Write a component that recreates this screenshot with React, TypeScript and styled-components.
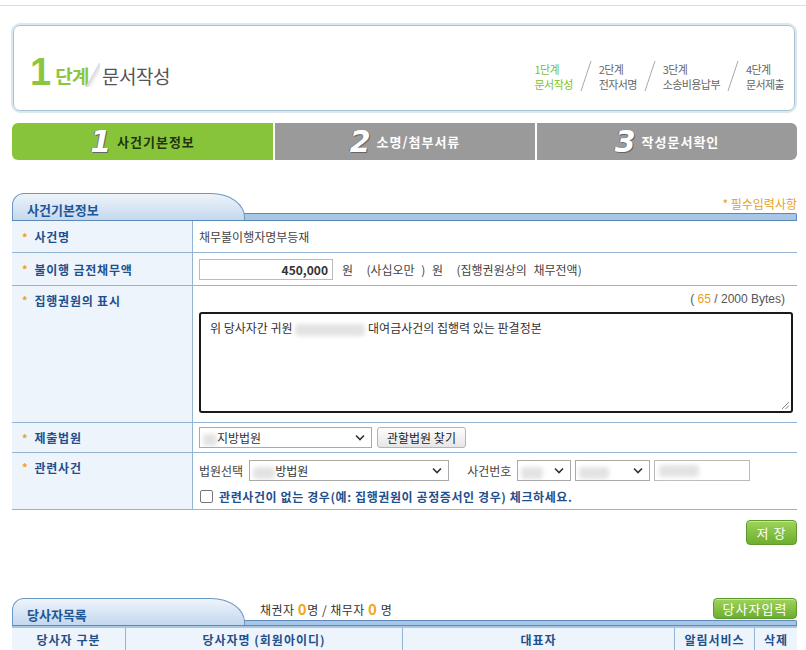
import React from 'react';
import styled, { createGlobalStyle } from 'styled-components';

const Global = createGlobalStyle`
  html, body { margin: 0; padding: 0; background: #fff; }
  body {
    font-family: "Noto Sans CJK KR", "Noto Sans", sans-serif;
    font-size: 12px;
    color: #444;
  }
  * { box-sizing: border-box; }
`;

const Page = styled.div`
  width: 806px;
  padding-top: 5px;
`;

const TopLine = styled.div`
  height: 1px;
  background: #dedede;
`;

const Content = styled.div`
  margin-left: 12px;
  width: 785px;
`;

const HeaderBox = styled.div`
  margin: 19px 0 0 1px;
  width: 782px;
  height: 86px;
  border: 1px solid #a8c2d2;
  box-shadow: 0 0 0 2px #dbe8ef;
  border-radius: 7px;
  display: flex;
  align-items: flex-end;
  justify-content: space-between;
  padding: 0 10px 18px 16px;
`;

const TitleWrap = styled.div`
  display: flex;
  align-items: flex-end;
  margin-bottom: 5px;
`;

const BigNum = styled.span`
  font-family: "Liberation Sans", sans-serif;
  font-size: 38px;
  line-height: 30px;
  font-weight: 700;
  color: #8cc63f;
  margin-right: 4px;
`;

const StepWord = styled.span`
  font-size: 19px;
  line-height: 22px;
  font-weight: 700;
  color: #8cc63f;
  letter-spacing: -0.5px;
`;

const Fold = styled.span`
  display: inline-block;
  width: 14px;
  height: 24px;
  margin: 0 2px 0 -3px;
  background: linear-gradient(120deg, transparent 45%, #d9d9d9 50%, #f5f5f5 65%, transparent 75%);
`;

const TitleText = styled.span`
  font-size: 19px;
  line-height: 22px;
  color: #555;
  letter-spacing: -0.5px;
`;

const Steps = styled.div`
  display: flex;
  align-items: flex-end;
`;

const StepItem = styled.div<{ $active?: boolean }>`
  display: flex;
  flex-direction: column;
  font-size: 11px;
  line-height: 15px;
  letter-spacing: -0.6px;
  color: ${p => (p.$active ? '#7cbf2a' : '#666')};
`;

const Slash = styled.svg`
  width: 12px;
  height: 32px;
  margin: 0 7px;
`;

const TabBar = styled.div`
  margin-top: 12px;
  display: grid;
  grid-template-columns: 261px 260px 260px;
  gap: 2px;
  height: 37px;
`;

const StepTab = styled.div<{ $active?: boolean; $pos: 'first' | 'mid' | 'last' }>`
  background: ${p => (p.$active ? '#88c43a' : '#9a9a9a')};
  border-radius: ${p => (p.$pos === 'first' ? '6px 0 0 6px' : p.$pos === 'last' ? '0 6px 6px 0' : '0')};
  display: flex;
  align-items: center;
  justify-content: center;
  gap: 6px;
  color: ${p => (p.$active ? '#1f3510' : '#fff')};
  font-weight: 700;
  font-size: 13px;
  letter-spacing: 1px;
`;

const TabNum = styled.span`
  font-family: "DejaVu Sans", sans-serif;
  font-style: italic;
  font-weight: 700;
  font-size: 30px;
  line-height: 30px;
  color: #fff;
  letter-spacing: 0;
  text-shadow: 1px 1px 0 #666, -1px 0 0 #777;
`;

const SectionHead = styled.div<{ $mt: number }>`
  margin-top: ${p => p.$mt}px;
  display: flex;
  align-items: flex-end;
  height: 28px;
  border-bottom: 1px solid #5d89b8;
`;

const SecTab = styled.div`
  width: 233px;
  height: 27px;
  background: linear-gradient(#eef4fb, #c4d8ee);
  border: 1px solid #6b96c3;
  border-bottom: none;
  border-radius: 12px 34px 0 0 / 12px 24px 0 0;
  padding: 8px 0 0 14px;
  font-size: 13px;
  font-weight: 700;
  color: #1f5796;
  line-height: 16px;
  margin-right: -1px;
  position: relative;
  z-index: 1;
`;

const SecRight = styled.div`
  flex: 1;
  display: flex;
  flex-direction: column;
  justify-content: flex-end;
  height: 100%;
`;

const SecRightTop = styled.div`
  flex: 1;
  display: flex;
  align-items: center;
  justify-content: space-between;
  padding: 0 0 1px 16px;
`;

const SecBar = styled.div`
  height: 8px;
  background: #a8c6e6;
  border: 1px solid #5d89b8;
  border-bottom: none;
  border-left: none;
  border-radius: 0 2px 0 0;
`;

const Required = styled.span`
  margin-left: auto;
  color: #e6a11c;
  font-size: 12px;
  margin-top: 2px;
`;

const Table = styled.div`
  display: flex;
  flex-direction: column;
`;

const Row = styled.div<{ $h: number }>`
  display: grid;
  grid-template-columns: 181px 1fr;
  height: ${p => p.$h}px;
  border-bottom: 1px solid #93b4d2;
`;

const Label = styled.div<{ $top?: boolean }>`
  background: #edf4fc;
  border-right: 1px solid #93b4d2;
  display: flex;
  align-items: ${p => (p.$top ? 'flex-start' : 'center')};
  padding: ${p => (p.$top ? '6px 0 0 10px' : '0 0 0 10px')};
  font-weight: 700;
  font-size: 12px;
  color: #1f4f8c;
  letter-spacing: 0.8px;
`;

const Star = styled.span`
  color: #f0a020;
  margin-right: 6px;
  font-size: 11px;
`;

const Value = styled.div<{ $col?: boolean }>`
  display: flex;
  flex-direction: ${p => (p.$col ? 'column' : 'row')};
  align-items: ${p => (p.$col ? 'stretch' : 'center')};
  padding: 0 8px 0 6px;
  gap: 6px;
  color: #444;
`;

const Amount = styled.div`
  width: 134px;
  height: 21px;
  border: 1px solid #bbb;
  text-align: right;
  padding: 0 4px;
  font-weight: 700;
  line-height: 19px;
  color: #333;
`;

const Spaced = styled.span`
  word-spacing: 4px;
  margin-left: 3px;
`;

const ByteCount = styled.div`
  text-align: right;
  padding: 6px 4px 0 0;
  font-family: "Liberation Sans", sans-serif;
  font-size: 12px;
  color: #555;
`;

const Orange = styled.span`
  color: #e6a11c;
`;

const TextBox = styled.div`
  position: relative;
  height: 101px;
  border: 2px solid #1a1a1a;
  border-radius: 3px;
  padding: 5px 9px;
  font-size: 12px;
  color: #333;
  margin-right: -4px;
`;

const Grip = styled.svg`
  position: absolute;
  right: 1px;
  bottom: 1px;
  width: 9px;
  height: 9px;
`;

const Blur = styled.span<{ $w: number }>`
  display: inline-block;
  width: ${p => p.$w}px;
  height: 12px;
  vertical-align: middle;
  background: #e3e3e3;
  filter: blur(2px);
  border-radius: 4px;
`;

const SelectBox = styled.div<{ $w: number }>`
  width: ${p => p.$w}px;
  height: 21px;
  border: 1px solid #a9a9a9;
  display: flex;
  align-items: center;
  justify-content: space-between;
  padding: 0 6px 0 3px;
  font-size: 12px;
  color: #333;
  background: #fff;
  overflow: hidden;
  white-space: nowrap;
`;

const Chevron = () => (
  <svg width="10" height="7" viewBox="0 0 10 7">
    <path d="M1 1.5 L5 5.5 L9 1.5" fill="none" stroke="#333" strokeWidth="1.6" />
  </svg>
);

const GrayBtn = styled.button`
  height: 21px;
  padding: 0 9px;
  border: 1px solid #b5b5b5;
  border-radius: 3px;
  background: linear-gradient(#fdfdfd, #e6e6e6);
  font-family: inherit;
  font-size: 12px;
  color: #222;
  margin-left: -1px;
`;

const InputBox = styled.div<{ $w: number }>`
  width: ${p => p.$w}px;
  height: 21px;
  border: 1px solid #bbb;
  display: flex;
  align-items: center;
  padding: 0 4px;
`;

const RelTop = styled.div`
  display: flex;
  align-items: center;
  gap: 4px;
  margin-top: 7px;
`;

const FieldLabel = styled.span<{ $ml?: number }>`
  margin-left: ${p => p.$ml || 0}px;
  margin-right: 2px;
`;

const CheckLine = styled.label`
  display: flex;
  align-items: center;
  gap: 6px;
  font-weight: 700;
  color: #1f4f8c;
  letter-spacing: 0.6px;
  font-size: 12px;
  margin-top: 1px;
`;

const CheckBox = styled.span`
  width: 13px;
  height: 13px;
  border: 1px solid #777;
  border-radius: 2px;
  background: #fff;
  margin-left: 1px;
`;

const ActionRow = styled.div`
  display: flex;
  justify-content: flex-end;
  margin-top: 10px;
`;

const GreenBtn = styled.button<{ $w: number; $h: number }>`
  width: ${p => p.$w}px;
  height: ${p => p.$h}px;
  border: 1px solid #5d9c2c;
  border-radius: 4px;
  background: linear-gradient(#9fd35a, #6cae2f);
  color: #fff;
  font-family: inherit;
  font-size: 13px;
  letter-spacing: 1px;
  padding: 0;
  box-shadow: inset 0 1px 0 rgba(255,255,255,0.4);
`;

const PartyInfo = styled.span`
  font-size: 12px;
  color: #333;
  letter-spacing: 0.5px;
`;

const BigOrange = styled.span`
  color: #f0a81c;
  font-size: 15px;
  font-weight: 700;
`;

const HeadRow = styled.div`
  display: grid;
  grid-template-columns: 114px 277px 272px 80px 1fr;
  height: 24px;
  background: #edf4fc;
  border-top: 2px solid #a8c6e6;
`;

const HeadCell = styled.div<{ $last?: boolean }>`
  border-right: ${p => (p.$last ? 'none' : '1px solid #93b4d2')};
  display: flex;
  align-items: center;
  justify-content: center;
  font-weight: 700;
  font-size: 12px;
  color: #1f4f8c;
  letter-spacing: 1px;
`;

const stepList = [
  { a: '1단계', b: '문서작성', active: true },
  { a: '2단계', b: '전자서명' },
  { a: '3단계', b: '소송비용납부' },
  { a: '4단계', b: '문서제출' },
];

export default function App() {
  return (
    <Page>
      <Global />
      <TopLine />
      <Content>
        <HeaderBox>
          <TitleWrap>
            <BigNum>1</BigNum>
            <StepWord>단계</StepWord>
            <Fold />
            <TitleText>문서작성</TitleText>
          </TitleWrap>
          <Steps>
            {stepList.map((s, i) => (
              <React.Fragment key={s.a}>
                {i > 0 && (
                  <Slash viewBox="0 0 12 32">
                    <line x1="11" y1="1" x2="1" y2="31" stroke="#aaa" strokeWidth="1" />
                  </Slash>
                )}
                <StepItem $active={s.active}>
                  <span>{s.a}</span>
                  <span>{s.b}</span>
                </StepItem>
              </React.Fragment>
            ))}
          </Steps>
        </HeaderBox>

        <TabBar>
          <StepTab $active $pos="first"><TabNum>1</TabNum>사건기본정보</StepTab>
          <StepTab $pos="mid"><TabNum>2</TabNum>소명/첨부서류</StepTab>
          <StepTab $pos="last"><TabNum>3</TabNum>작성문서확인</StepTab>
        </TabBar>

        <SectionHead $mt={33}>
          <SecTab>사건기본정보</SecTab>
          <SecRight>
            <SecRightTop>
              <Required>* 필수입력사항</Required>
            </SecRightTop>
            <SecBar />
          </SecRight>
        </SectionHead>

        <Table>
          <Row $h={32}>
            <Label><Star>*</Star>사건명</Label>
            <Value>채무불이행자명부등재</Value>
          </Row>
          <Row $h={33}>
            <Label><Star>*</Star>불이행 금전채무액</Label>
            <Value>
              <Amount>450,000</Amount>
              <Spaced>원 &nbsp;(사십오만 ) 원 &nbsp;(집행권원상의 채무전액)</Spaced>
            </Value>
          </Row>
          <Row $h={137}>
            <Label $top><Star>*</Star>집행권원의 표시</Label>
            <Value $col>
              <ByteCount>( <Orange>65</Orange> / 2000 Bytes)</ByteCount>
              <TextBox>
                위 당사자간 귀원 <Blur $w={70} /> 대여금사건의 집행력 있는 판결정본
                <Grip viewBox="0 0 9 9">
                  <line x1="8" y1="1" x2="1" y2="8" stroke="#888" />
                  <line x1="8" y1="4.5" x2="4.5" y2="8" stroke="#888" />
                </Grip>
              </TextBox>
            </Value>
          </Row>
          <Row $h={30}>
            <Label><Star>*</Star>제출법원</Label>
            <Value>
              <SelectBox $w={173}>
                <span><Blur $w={14} />지방법원</span>
                <Chevron />
              </SelectBox>
              <GrayBtn>관할법원 찾기</GrayBtn>
            </Value>
          </Row>
          <Row $h={57}>
            <Label $top><Star>*</Star>관련사건</Label>
            <Value $col>
              <RelTop>
                <FieldLabel>법원선택</FieldLabel>
                <SelectBox $w={200}>
                  <span><Blur $w={22} />방법원</span>
                  <Chevron />
                </SelectBox>
                <FieldLabel $ml={14}>사건번호</FieldLabel>
                <SelectBox $w={54}>
                  <span><Blur $w={22} /></span>
                  <Chevron />
                </SelectBox>
                <SelectBox $w={75}>
                  <span><Blur $w={30} /></span>
                  <Chevron />
                </SelectBox>
                <InputBox $w={96}><Blur $w={40} /></InputBox>
              </RelTop>
              <CheckLine>
                <CheckBox />
                관련사건이 없는 경우(예: 집행권원이 공정증서인 경우) 체크하세요.
              </CheckLine>
            </Value>
          </Row>
        </Table>

        <ActionRow>
          <GreenBtn $w={51} $h={25}>저 장</GreenBtn>
        </ActionRow>

        <SectionHead $mt={53}>
          <SecTab>당사자목록</SecTab>
          <SecRight>
            <SecRightTop>
              <PartyInfo>채권자 <BigOrange>0</BigOrange>명 / 채무자 <BigOrange>0</BigOrange> 명</PartyInfo>
              <GreenBtn $w={84} $h={21}>당사자입력</GreenBtn>
            </SecRightTop>
            <SecBar />
          </SecRight>
        </SectionHead>
        <HeadRow>
          <HeadCell>당사자 구분</HeadCell>
          <HeadCell>당사자명 (회원아이디)</HeadCell>
          <HeadCell>대표자</HeadCell>
          <HeadCell>알림서비스</HeadCell>
          <HeadCell $last>삭제</HeadCell>
        </HeadRow>
      </Content>
    </Page>
  );
}
